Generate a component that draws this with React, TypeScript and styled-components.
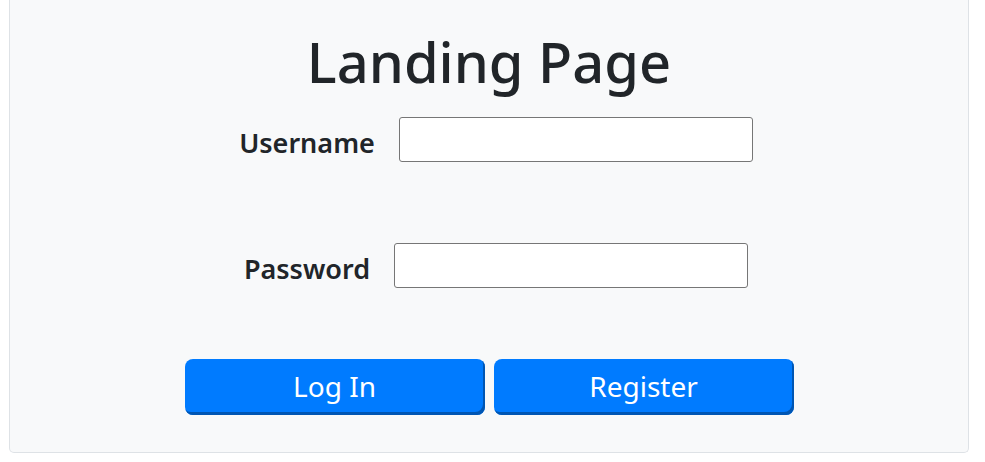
import React, { useState } from 'react';
import styled, { createGlobalStyle } from 'styled-components';

const GlobalStyle = createGlobalStyle`
  html, body {
    margin: 0;
    padding: 0;
    background: #ffffff;
  }
  body {
    font-family: "Noto Sans", "Open Sans", "Liberation Sans", sans-serif;
    color: #212529;
  }
`;

function App() {
  const [username, setUsername] = useState('');
  const [password, setPassword] = useState('');

  return (
    <>
      <GlobalStyle />
      <Card>
        <Title>Landing Page</Title>
        <Form onSubmit={(e) => e.preventDefault()}>
          <Row>
            <Label htmlFor="username">Username</Label>
            <Input id="username" value={username} onChange={(e) => setUsername(e.target.value)} />
          </Row>
          <Row>
            <Label htmlFor="password">Password</Label>
            <Input id="password" type="password" value={password} onChange={(e) => setPassword(e.target.value)} />
          </Row>
          <Buttons>
            <Button type="submit">Log In</Button>
            <Button type="button">Register</Button>
          </Buttons>
        </Form>
      </Card>
    </>
  );
}

export default App;

const Card = styled.div`
  margin: 0 16px 9px 9px;
  padding: 28px 0 37px;
  background-color: #f8f9fa;
  border: 1px solid #dee2e6;
  border-top: none;
  border-radius: 0 0 5px 5px;
  display: flex;
  flex-direction: column;
  align-items: center;
`;

const Title = styled.h1`
  margin: 0 0 22px;
  font-size: 56px;
  line-height: 67px;
  font-weight: 500;
  color: #212529;
`;

const Form = styled.form`
  display: flex;
  flex-direction: column;
  align-items: center;
`;

const Row = styled.div`
  display: flex;
  align-items: center;
  gap: 24px;
  height: 45px;
  margin-bottom: 81px;
  padding-left: 14px;
`;

const Label = styled.label`
  padding-top: 5px;
  font-size: 27px;
  font-weight: 600;
  color: #212529;
`;

const Input = styled.input`
  box-sizing: border-box;
  width: 354px;
  height: 45px;
  padding: 4px 8px;
  font-size: 20px;
  font-family: inherit;
  background: #ffffff;
  border: 1px solid #767676;
  border-radius: 3px;
  outline: none;
`;

const Buttons = styled.div`
  display: flex;
  gap: 9px;
  margin-top: -10px;
`;

const Button = styled.button`
  box-sizing: border-box;
  width: 300px;
  height: 56px;
  padding: 0 0 2px;
  font-family: inherit;
  font-size: 28px;
  color: #ffffff;
  background-color: #007bff;
  border: none;
  border-radius: 8px;
  box-shadow: inset -2px -3px 0 #0056b3;
  cursor: pointer;
`;
